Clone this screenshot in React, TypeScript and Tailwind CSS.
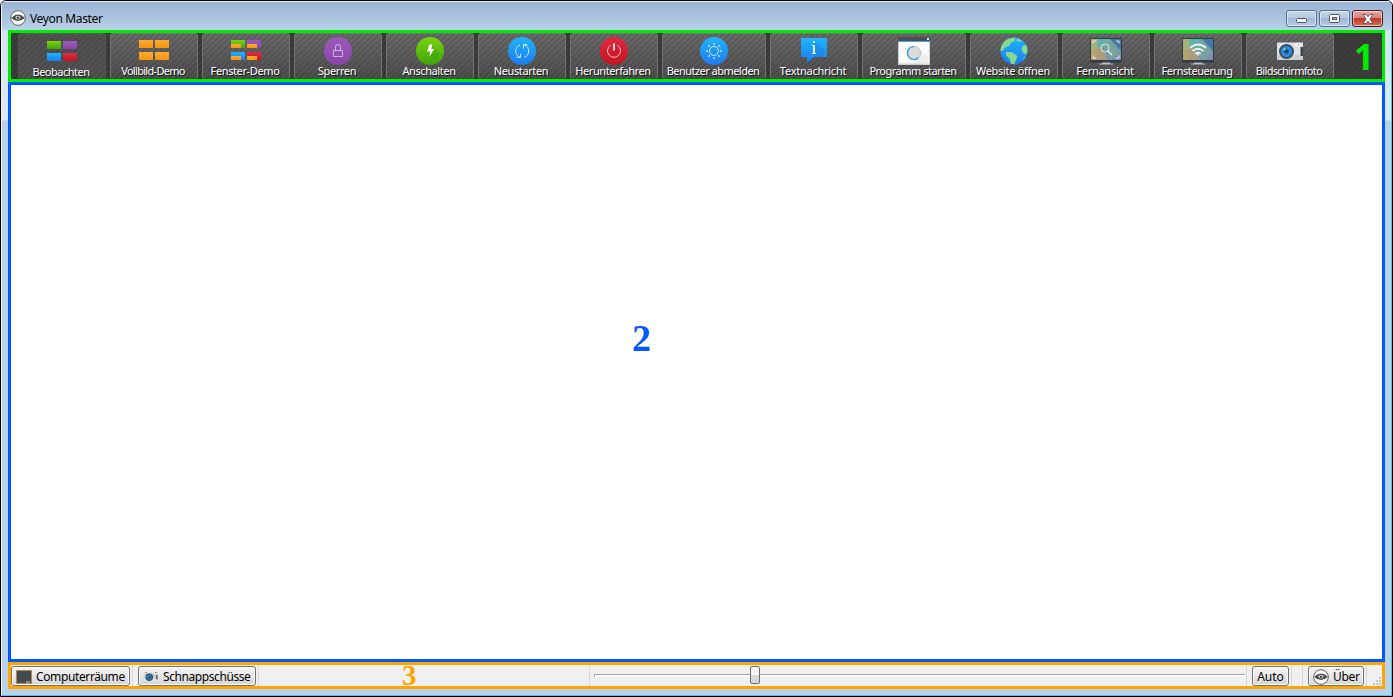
import React from "react";

const stripes = "bg-[repeating-linear-gradient(135deg,rgba(0,0,0,0.13)_0px,rgba(0,0,0,0.13)_0.8px,transparent_1.2px,transparent_4.24px)]";

function Defs() {
  return (
    <svg className="absolute h-0 w-0" aria-hidden="true">
      <defs>
        <linearGradient id="gr" x1="0" y1="0" x2="0" y2="1"><stop stopColor="#78d50e" /><stop offset="1" stopColor="#3fa40b" /></linearGradient>
        <linearGradient id="pu" x1="0" y1="0" x2="0" y2="1"><stop stopColor="#9c5bb8" /><stop offset="1" stopColor="#8a44ab" /></linearGradient>
        <linearGradient id="bl" x1="0" y1="0" x2="0" y2="1"><stop stopColor="#20b4fb" /><stop offset="1" stopColor="#1d7bf0" /></linearGradient>
        <linearGradient id="re" x1="0" y1="0" x2="0" y2="1"><stop stopColor="#df2b43" /><stop offset="1" stopColor="#c3131f" /></linearGradient>
        <linearGradient id="or" x1="0" y1="0" x2="0" y2="1"><stop stopColor="#fdaa35" /><stop offset="1" stopColor="#f7930c" /></linearGradient>
      </defs>
    </svg>
  );
}

const quads = [[1, 5, "gr"], [17, 5, "pu"], [1, 17, "bl"], [17, 17, "re"]] as const;

function Tiles({ kind }: { kind: "colour" | "orange" | "window" }) {
  return (
    <g>
      {quads.map(([x, y, c]) => (
        <g key={c}>
          <rect x={x} y={y} width="14" height="8" fill={kind === "orange" ? "url(#or)" : `url(#${c})`} />
          {kind === "window" && <rect x={x} y={y + 4} width="10" height="4" fill="url(#or)" />}
        </g>
      ))}
    </g>
  );
}

function Disc({ c, children }: { c: string; children: React.ReactNode }) {
  return (
    <g>
      <circle cx="16" cy="16" r="14" fill={`url(#${c})`} />
      <g fill="none" stroke="#fff" strokeOpacity=".75" strokeWidth="1">{children}</g>
    </g>
  );
}

function Monitor({ children }: { children: React.ReactNode }) {
  return (
    <g>
      <path d="M12 27h8v1.5h3v1H9v-1h3z" fill="#b9c0c5" />
      <rect x="0" y="3" width="32" height="24.5" rx="1" fill="#333b45" />
      <rect x="1" y="4" width="30" height="21" fill="#6fa39e" />
      <path d="M1 4h7l-2 21H1z" fill="#a3b47a" />
      <path d="M8 4h12L7 19z" fill="#5cb3ad" />
      <path d="M20 4h11v12z" fill="#4677a5" />
      <path d="M17 8l14 9v8H13z" fill="#7c91b5" />
      <path d="M1 16l10-5 7 14H1z" fill="#bf996f" fillOpacity=".75" />
      <path d="M18 5l11 13-8 7-8-13z" fill="#75ae91" fillOpacity=".7" />
      {children}
    </g>
  );
}

function Camera({ small = false }: { small?: boolean }) {
  return (
    <g>
      <path d="M4 7h4v1H4zM24 6h3v2h-3z" fill="#59636b" />
      <rect x="3" y="7.5" width="26" height="17.5" fill={small ? "#c8cdd1" : "#dfe3e5"} />
      <path d="M3 20h26v5H3z" fill={small ? "#e6e8e9" : "#c9cfd2"} />
      <path d="M26.5 12h2.5v9h-2.5z" fill="#3c4750" />
      <rect x="21" y="8" width="6" height="3" fill="#f3f5f6" />
      <path d="M24 9h1v1h-1z" fill="#e25678" />
      <circle cx="12.5" cy="16.5" r="7.5" fill="#3c4d5c" />
      <circle cx="12.5" cy="16.5" r="5.5" fill={small ? "#2778b9" : "#288ce0"} />
      <circle cx="12.5" cy="16.5" r="2.3" fill="#174773" />
      <circle cx="10.5" cy="14.3" r="1" fill="#b7dcf5" />
    </g>
  );
}

const icons: Record<string, React.ReactNode> = {
  watch: <Tiles kind="colour" />,
  full: <Tiles kind="orange" />,
  window: <Tiles kind="window" />,
  lock: <Disc c="pu"><path d="M11.5 15.5h9v6h-9zM13.5 15.5v-4q0-2 2.5-2t2.5 2v4" strokeOpacity=".55" /></Disc>,
  power: <Disc c="gr"><path d="M17 10l9 9-4 7-7-5z" fill="#278900" fillOpacity=".25" stroke="none" /><path d="M15.2 9.5h3l-.8 4.5h2.8l-5 8 1-5.5h-3z" fill="#fff" stroke="none" /></Disc>,
  restart: <Disc c="bl"><path d="M13.8 10a6.5 6.5 0 0 0 .2 12.2M14.5 18.5v3.8h-4M18.2 22.2A6.5 6.5 0 0 0 18 9.8M17.5 13.5V9.7h4" /></Disc>,
  down: <Disc c="re"><path d="M12.5 10.3a6.5 6.5 0 1 0 7 0" /><path d="M16 8.5v7" strokeWidth="1.6" strokeOpacity="1" /></Disc>,
  logout: <Disc c="bl"><circle cx="16" cy="16" r="4.5" /><path d="M16 8v2M16 22v2M8 16h2M22 16h2M10.3 10.3l1.4 1.4M20.3 20.3l1.4 1.4M10.3 21.7l1.4-1.4M20.3 11.7l1.4-1.4" strokeWidth="1.4" /></Disc>,
  message: (
    <g>
      <path d="M3 3h26v19H16l-7 6v-6H3z" fill="url(#bl)" />
      <path d="M17 7l9 8v7h-5l-6-5z" fill="#167bc6" fillOpacity=".35" />
      <path d="M15 6h2v2h-2zM14 10h3v8h1v1h-4v-1h1v-7h-1z" fill="#d6edf8" />
    </g>
  ),
  program: (
    <g>
      <rect x="0" y="3" width="32" height="27" fill="#c9ced1" />
      <rect x="0" y="2" width="32" height="5" fill="#4b5157" />
      <rect x="29" y="3" width="2" height="2" fill="#e5e8ea" />
      <rect x="0" y="6" width="32" height="1" fill="#45a5d4" />
      <rect x="1" y="7" width="30" height="21.5" fill="#fafafa" />
      <path d="M20 13l10 9v6H15z" fill="#eee" />
      <circle cx="16" cy="18" r="6.5" fill="#dcdcdc" stroke="#aeb9c0" />
      <path d="M16 11.5a6.5 6.5 0 1 0 4.6 11" fill="none" stroke="#319eea" strokeWidth="1.2" />
    </g>
  ),
  globe: (
    <g>
      <circle cx="16" cy="16" r="13.5" fill="url(#bl)" />
      <path d="M3.5 11Q7 3.2 15 2.7l2 .6v2.2l-4 2-1.5 3L7 12.5 4.5 16l-2-.5q0-2.5 1-4.5zM8 17l6 .3 5.5 3.7-1.2 3.3-2 4.7h-3l-1.8-5.3L8 20.5zM23.5 14l1.5-3.5 3.5-.2 1 5-1.3 4-3-1zM19 3.5l4.8 2L22 7l-3-1zM26 22.5l2-1-3.5 4.2z" fill="#87d990" />
    </g>
  ),
  view: <Monitor><path d="M3 8.5V6h3M29 8.5V6h-3M3 20.5V23h3M29 20.5V23h-3" stroke="#e7efe9" fill="none" /><circle cx="15" cy="13" r="4" fill="none" stroke="#dce9e7" /><path d="M18 16l4 4" stroke="#e8eeee" strokeWidth="1.5" /></Monitor>,
  control: <Monitor><path d="M8 13q8-7 16 0M10.5 16.2q5.5-5 11 0M13.3 18.7q2.7-2.2 5.4 0" fill="none" stroke="#e9f2f2" strokeWidth="1.8" /><circle cx="16" cy="19.6" r="1.1" fill="#f4f7f7" /></Monitor>,
  camera: <Camera />,
};

const tools = [
  ["watch", "Beobachten", "tracking-[-0.5px]"],
  ["full", "Vollbild-Demo", "tracking-[-0.7px]"],
  ["window", "Fenster-Demo", "tracking-[-0.38px]"],
  ["lock", "Sperren", "tracking-[-0.4px]"],
  ["power", "Anschalten", "tracking-[-0.4px]"],
  ["restart", "Neustarten", "tracking-[-0.4px]"],
  ["down", "Herunterfahren", "tracking-[-0.43px]"],
  ["logout", "Benutzer abmelden", "tracking-[-0.53px]"],
  ["message", "Textnachricht", "tracking-[-0.25px]"],
  ["program", "Programm starten", "tracking-[-0.5px]"],
  ["globe", "Website öffnen", "tracking-[-0.29px]"],
  ["view", "Fernansicht", "tracking-[-0.27px]"],
  ["control", "Fernsteuerung", "tracking-[-0.43px]"],
  ["camera", "Bildschirmfoto", "tracking-[-0.67px]"],
];

function Tool({ icon, label, tracking }: { icon: string; label: string; tracking: string }) {
  const wide = icon === "logout" || icon === "program";
  const active = icon === "watch";
  return (
    <button className={`flex h-[46px] shrink-0 flex-col items-center rounded-[3px] border-x border-t ${wide ? "w-[104px]" : "w-[88px]"} ${active ? "border-[#545454] bg-[#515151] pt-px" : "border-[#737373] bg-linear-to-b from-[#696969] to-[#4d4d4d]"}`}>
      <span className={`flex h-[45px] w-full flex-col items-center ${stripes}`}>
        <svg className="mt-px h-8 w-8 shrink-0" viewBox="0 0 32 32">{icons[icon]}</svg>
        <span className={`-mt-[2px] pr-[2px] text-[11px] leading-[12px] whitespace-nowrap text-white [text-shadow:1px_1px_0_#151515] ${tracking}`}>{label}</span>
      </span>
    </button>
  );
}

function Eye() {
  return (
    <svg className="h-4 w-4 shrink-0" viewBox="0 0 16 16">
      <circle cx="8" cy="8" r="7.3" fill="#fff" stroke="#606060" strokeWidth="1" />
      <path d="M1.2 8Q4.5 4.6 8 4.6T14.8 8Q11.5 11 8 11T1.2 8z" fill="#4d4d4d" />
      <ellipse cx="8" cy="7.6" rx="2.5" ry="1.9" fill="#e8e8e8" /><ellipse cx="8" cy="7.7" rx="1.5" ry="1.2" fill="#4d4d4d" />
    </svg>
  );
}

const button = "flex h-[20px] shrink-0 items-center rounded-[3px] border border-[#707070] bg-linear-to-b from-[#f3f3f3] via-[#e8e8e8] to-[#d3d3d3] pt-px text-[12px] text-black shadow-[inset_0_0_0_1px_#fafafa]";
const caption = "flex h-[17px] w-[31px] items-center justify-center rounded-[3px] border shadow-[inset_0_0_0_1px_rgba(255,255,255,0.55)]";
const captionBlue = "border-[#536f91] bg-[linear-gradient(#c4d5e7,#b4c8de_49%,#9fb8d3_50%,#b6cde4)]";

export default function App() {
  return (
    <div className="flex h-[697px] w-[1393px] flex-col overflow-hidden rounded-t-[6px] border border-black bg-[#bad1e9] font-['Noto_Sans',sans-serif] shadow-[inset_-1px_-1px_0_#45c8e2,inset_1px_1px_0_#edf5fc]">
      <Defs />
      <header className="flex h-[29px] shrink-0 items-start bg-linear-to-b from-[#98b3d2] to-[#b9d1e8] pt-[9px] pr-[9px] pl-[9px] shadow-[inset_1px_1px_0_#edf5fc]">
        <Eye />
        <span className="mt-px ml-[4px] text-[12px] leading-[16px] tracking-[-0.35px] text-black">Veyon Master</span>
        <div className="ml-auto flex gap-[2px]">
          <span className={`${caption} ${captionBlue}`}>
            <svg className="mt-[3px]" width="12" height="6" viewBox="0 0 12 6"><rect x=".5" y="1.5" width="10" height="4" rx="1" fill="#f7f7f7" stroke="#4e5668" /></svg>
          </span>
          <span className={`${caption} ${captionBlue}`}>
            <svg width="12" height="10" viewBox="0 0 12 10"><rect x=".5" y=".5" width="10" height="8" rx="1" fill="#f7f7f7" stroke="#4e5668" /><rect x="3.5" y="3.5" width="4" height="2" fill="#9db5cf" stroke="#4e5668" /></svg>
          </span>
          <span className={`${caption} border-[#531629] bg-[linear-gradient(#e5a59b,#d98378_49%,#bd3c27_50%,#d27452)]`}>
            <svg width="12" height="10" viewBox="0 0 12 10"><path d="M1 .5h3l2 2.3L8 .5h3L8 5l3 4.5H8L6 7.2 4 9.5H1L4 5z" fill="#f7f7f7" stroke="#4d4354" strokeWidth=".8" /></svg>
          </span>
        </div>
      </header>
      <div className="flex h-[659px] shrink-0 flex-col bg-[linear-gradient(#d6e4f2_0,#dce9f5_90px,#b9d1e9_91px)] pr-[7px] pl-[7px] shadow-[inset_-1px_0_0_#45c8e2,inset_1px_0_0_#edf5fc]">
        <nav className="flex h-[52px] shrink-0 border-[3px] border-[#00ec00] bg-[#3c3c3c]">
          <div className={`flex w-full gap-[4px] pl-[7px] ${stripes}`}>
            {tools.map(([icon, label, tracking]) => <Tool key={icon} icon={icon} label={label} tracking={tracking} />)}
            <span className="ml-[16px] text-[35px] leading-[48px] font-bold text-[#00ec00]">1</span>
          </div>
        </nav>
        <main className="flex h-[580px] shrink-0 border-[3px] border-[#0058ff] bg-white pt-[232px] pl-[621px]">
          <span className="font-['Liberation_Serif',serif] text-[38px] leading-[42px] font-bold text-[#0058ff]">2</span>
        </main>
        <footer className="flex h-[27px] shrink-0 border-[3px] border-[#ffa500] bg-[#f0f0f0] pt-px">
          <button className={`${button} w-[119px] pl-[4px] tracking-[-0.38px]`}>
            <svg className="mr-[4px] h-4 w-4 shrink-0" viewBox="0 0 16 16"><rect x=".5" y="1.5" width="15" height="13" fill="#434b52" stroke="#b9884f" /><path d="M10 13h4" stroke="#c8c8c8" /></svg>
            Computerräume
          </button>
          <i className="ml-[2px] w-px bg-[#d8d8d8]" />
          <button className={`${button} ml-[5px] w-[118px] pl-[4px] tracking-[-0.42px]`}>
            <svg className="mr-[4px] h-4 w-4 shrink-0" viewBox="0 0 32 32"><Camera small /></svg>
            Schnappschüsse
          </button>
          <i className="ml-[2px] w-px bg-[#d8d8d8]" />
          <span className="ml-[143px] h-[20px] w-[18px] font-['Liberation_Serif',serif] text-[29px] leading-[19px] font-bold text-[#ffa500]">3</span>
          <i className="ml-[169px] w-px bg-[#d8d8d8]" />
          <div className="ml-[4px] flex h-[18px] w-[651px] items-center">
            <i className="h-[3px] w-[156px] border-t border-l border-[#a5a5a5] bg-white" />
            <i className="h-[18px] w-[10px] rounded-[2px] border border-[#6d6d6d] bg-[linear-gradient(#f5f5f5_50%,#d9d9d9_50%)]" />
            <i className="h-[3px] flex-1 border-t border-[#a5a5a5] bg-white" />
          </div>
          <i className="ml-px w-px bg-[#d8d8d8]" />
          <button className={`${button} ml-[5px] w-[37px] justify-center`}>Auto</button>
          <i className="ml-[2px] w-px bg-[#d8d8d8]" />
          <i className="ml-[10px] w-px bg-[#d8d8d8]" />
          <button className={`${button} ml-[5px] w-[56px] gap-[4px] pl-[4px] tracking-[-0.3px]`}><Eye />Über</button>
          <i className="ml-[2px] w-px bg-[#d8d8d8]" />
          <svg className="mt-[9px] ml-auto h-[11px] w-[11px]" viewBox="0 0 11 11"><path d="M8 2h2v2H8zM5 5h2v2H5zM8 5h2v2H8zM2 8h2v2H2zM5 8h2v2H5zM8 8h2v2H8z" fill="#c8c8c8" /></svg>
        </footer>
      </div>
    </div>
  );
}
